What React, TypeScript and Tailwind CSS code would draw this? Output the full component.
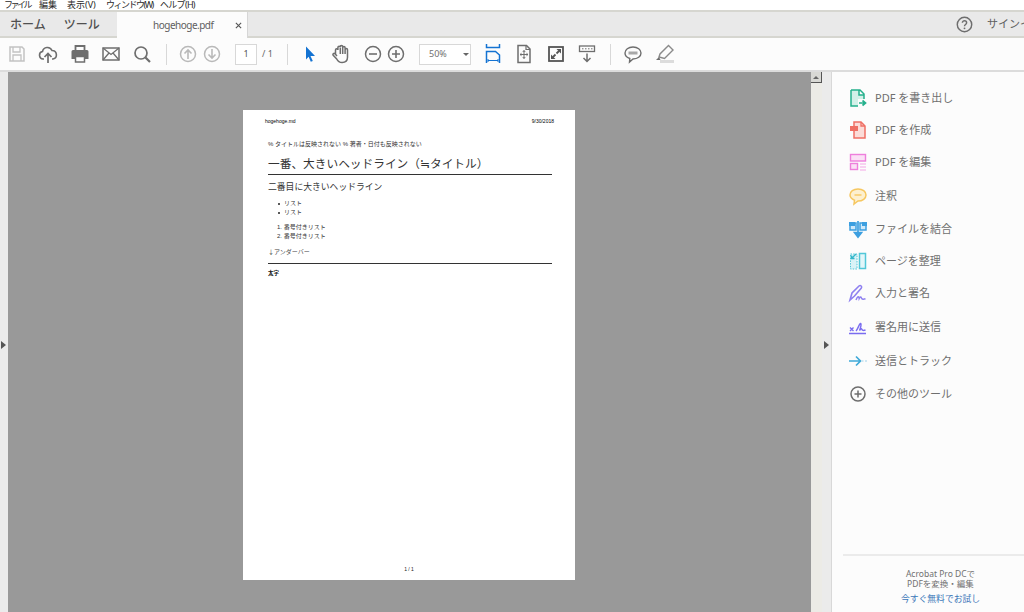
import React from "react";

const G = "#6e6e6e";
const L = "#b9b9b9";

const Svg = ({ children, className = "w-5 h-5" }: { children: React.ReactNode; className?: string }) => (
  <svg viewBox="0 0 20 20" fill="none" className={"shrink-0 " + className}>{children}</svg>
);

const Sep = ({ className }: { className: string }) => <div className={"w-px h-[21px] bg-[#d8d8d8] shrink-0 " + className} />;

function Row({ icon, label, className }: { icon: React.ReactNode; label: string; className: string }) {
  return (
    <div className={"flex items-center h-[32px] pl-[16px] gap-[7px] " + className}>
      <div className="w-5 h-5 shrink-0">{icon}</div>
      <span className="text-[11px] text-[#6f6f6f] whitespace-nowrap">{label}</span>
    </div>
  );
}

const sidebar: [React.ReactNode, string, string][] = [
  [<Svg><path d="M3 2h8v5h5v4H10v7H3z" fill="#d3f0e8"/><path d="M3 2h9l4 4v5M3 2v16h7M11 2v5h5" stroke="#25b08c" strokeWidth="1.500"/><path d="M11 15h6M14.500 12.500L17.500 15l-3 2.500" stroke="#25b08c" strokeWidth="1.700"/></Svg>, "PDF を書き出し", ""],
  [<Svg><path d="M6 2h7l4 4v12H6z" fill="#fbdcd8" stroke="#ef6f64" strokeWidth="1.500"/><path d="M13 2v4h4" stroke="#ef6f64" strokeWidth="1.300"/><rect x="2" y="6" width="8" height="5" fill="#ef6f64"/></Svg>, "PDF を作成", ""],
  [<Svg><rect x="2.500" y="2.500" width="15" height="6.500" fill="#fbe0f6" stroke="#ee7fdc" strokeWidth="1.400"/><rect x="2.500" y="11.500" width="7" height="6" fill="#fbe0f6" stroke="#ee7fdc" strokeWidth="1.400"/><path d="M12 12h6M12 15h6M12 18h6" stroke="#f3a5e6" strokeWidth="1.100"/></Svg>, "PDF を編集", ""],
  [<Svg><path d="M10 3c4.600 0 8 2.500 8 6s-3.400 6-8 6l-4 3 .5-3.700C3.800 13 2 11.300 2 9c0-3.500 3.400-6 8-6z" fill="#fdf0cf" stroke="#f6c760" strokeWidth="1.500"/><path d="M6.500 9h7" stroke="#f6c760" strokeWidth="1.400"/></Svg>, "注釈", "mt-[2px]"],
  [<Svg><path d="M2 4h6v7H2zM12 4h6v7h-6z" fill="#cfe9fa" stroke="#3c9fe0" strokeWidth="1.500"/><path d="M1 3h6v4H1zM14 3h5v4h-5z" fill="#3c9fe0"/><path d="M10 2v14M6.500 13.500L10 18l3.500-4.500z" stroke="#3c9fe0" strokeWidth="1.700" fill="#3c9fe0"/></Svg>, "ファイルを結合", "mt-[1px]"],
  [<Svg><rect x="2.500" y="3" width="6.500" height="15" fill="#d9f3f7" stroke="#52c7d8" strokeDasharray="1.500 1.200"/><rect x="11.500" y="2.500" width="6" height="15" fill="#e2f6f9" stroke="#52c7d8" strokeWidth="1.500"/><path d="M8 3L3.500 7.500M3.500 4.500v3h3" stroke="#35b6ca" strokeWidth="1.400"/></Svg>, "ページを整理", ""],
  [<Svg><path d="M2 17L4 10 11 3c1.500-1.300 3.500.5 2.200 2.200L6.500 13 2 17z" stroke="#8f80f0" strokeWidth="1.600"/><path d="M8 17c1.500-4 3-4 3.200-1.500 1-2 2-2 2.300-.5.500 1.500 2 1.500 4 .8" stroke="#8f80f0" strokeWidth="1.500"/></Svg>, "入力と署名", ""],
  [<Svg><path d="M1 16.500h17" stroke="#7a6cf0" strokeWidth="1.500"/><path d="M2 10.500l3.500 3.500M5.500 10.500L2 14" stroke="#7a6cf0" strokeWidth="1.400"/><path d="M8 14c2-2 3-7 4.500-7.500 1.200 0 0 5-1 7 1-1.500 2-2.500 2.500-1 .3 1.300 2 1 3.500.5" stroke="#7a6cf0" strokeWidth="1.400"/></Svg>, "署名用に送信", "mt-[2px]"],
  [<Svg><path d="M1 10h11M8 5.500l4.500 4.500L8 14.500" stroke="#3fa9d8" strokeWidth="1.700"/><path d="M14 10h1.500M17 10h2" stroke="#9fd2ea" strokeWidth="1.200"/></Svg>, "送信とトラック", "mt-[2px]"],
  [<Svg><circle cx="10" cy="10" r="7" stroke="#6e6e6e" strokeWidth="1.500"/><path d="M10 6.500v7M6.500 10h7" stroke="#6e6e6e" strokeWidth="1.500"/></Svg>, "その他のツール", "mt-[1px]"],
];

export default function App() {
  return (
    <div className="w-[1024px] h-[612px] overflow-hidden flex flex-col bg-[#fcfcfc] font-['Noto_Sans','Noto_Sans_CJK_JP',sans-serif]">
      {/* menu */}
      <div className="h-[10px] overflow-hidden bg-white flex items-end pl-[4px] text-[9px] leading-[13px] text-[#2a2a2a] shrink-0 whitespace-nowrap">
        <span className="-mb-[1px] w-[35px] tracking-[-2.500px]">ファイル</span>
        <span className="-mb-[1px] w-[28px]">編集</span>
        <span className="-mb-[1px] w-[39px]">表示(V)</span>
        <span className="-mb-[1px] w-[54px] tracking-[-1.500px]">ウィンドウ(W)</span>
        <span className="-mb-[1px] tracking-[-0.700px]">ヘルプ(H)</span>
      </div>
      {/* tabs */}
      <div className="h-[28px] shrink-0 flex bg-[#e9e9e9] border-t-2 border-b-2 border-[#d6d6d0]">
        <div className="flex items-center pl-[10px] pt-[2px] gap-[18px] w-[117px] text-[12px] font-medium text-[#505050]">
          <span>ホーム</span><span>ツール</span>
        </div>
        <div className="w-[131px] h-[26px] -mb-[2px] bg-[#fcfcfc] border-r border-[#d6d6d6] flex items-center pl-[36px] text-[10px] tracking-[-0.500px] text-[#606060]">
          <span>hogehoge.pdf</span>
          <svg viewBox="0 0 8 8" className="w-[7px] h-[7px] ml-[22px]"><path d="M1 1l6 6M7 1L1 7" stroke="#555" strokeWidth="1.300"/></svg>
        </div>
        <div className="flex-1 flex items-center justify-end">
          <Svg className="w-[17px] h-[17px] mr-[14px]"><circle cx="10" cy="10" r="8.500" stroke={G} strokeWidth="1.700"/><path d="M7.500 8c0-3.300 5-3.300 5 0 0 2-2.500 2-2.500 4" stroke={G} strokeWidth="1.700"/><circle cx="10" cy="14.500" r="1.100" fill={G}/></Svg>
          <span className="w-[37px] overflow-hidden whitespace-nowrap text-[11px] text-[#606060]">サインイン</span>
        </div>
      </div>
      {/* toolbar */}
      <div className="shrink-0 flex items-center bg-[#fcfcfc] border-b-2 border-[#dcdcdc] box-content h-[32px]">
        <Svg className="w-5 h-5 ml-[7px]"><path d="M3 3h12l2 2v12H3z" stroke="#c2c2c2" strokeWidth="1.500"/><path d="M6 3v5h7V3M6 17v-6h8v6" stroke="#c2c2c2" strokeWidth="1.300"/></Svg>
        <Svg className="w-5 h-5 ml-[11px]"><path d="M6 15H5a3.800 3.800 0 0 1-.5-7.500 5 5 0 0 1 9.500-1 4.300 4.300 0 0 1 1 8.500h-1" stroke={G} strokeWidth="1.600"/><path d="M10 19v-9M6.500 13L10 9.500l3.500 3.500" stroke={G} strokeWidth="1.700"/></Svg>
        <Svg className="w-5 h-5 ml-[12px]"><path d="M5.500 6V2h9v4" stroke={G} strokeWidth="1.800"/><path d="M3 6h14a1.500 1.500 0 0 1 1.500 1.500V15H15v-3H5v3H1.500V7.500A1.500 1.500 0 0 1 3 6z" fill={G}/><rect x="5.500" y="12.500" width="9" height="5.500" stroke={G} strokeWidth="1.500"/></Svg>
        <Svg className="w-5 h-5 ml-[11px]"><rect x="2" y="4" width="16" height="12" stroke={G} strokeWidth="1.500"/><path d="M2 4l8 6.500L18 4M2 16l6-7M18 16l-6-7" stroke={G} strokeWidth="1.300"/></Svg>
        <Svg className="w-5 h-5 ml-[11px]"><circle cx="9" cy="9" r="6" stroke={G} strokeWidth="1.700"/><path d="M13.500 13.500L18 18" stroke={G} strokeWidth="2.200"/></Svg>
        <Sep className="ml-[14px]" />
        <Svg className="w-5 h-5 ml-[11px]"><circle cx="10" cy="10" r="7.500" stroke={L} strokeWidth="1.500"/><path d="M10 15V6M6.500 9.500L10 6l3.500 3.500" stroke={L} strokeWidth="1.600"/></Svg>
        <Svg className="w-5 h-5 ml-[4px]"><circle cx="10" cy="10" r="7.500" stroke={L} strokeWidth="1.500"/><path d="M10 5v9M6.500 10.500L10 14l3.500-3.500" stroke={L} strokeWidth="1.600"/></Svg>
        <div className="w-[22px] h-[21px] ml-[13px] border border-[#d8d8d8] bg-white flex items-center justify-center text-[9px] text-[#555]">1</div>
        <span className="ml-[5px] w-[10px] whitespace-nowrap text-[9px] text-[#666]">/ 1</span>
        <Sep className="ml-[15px]" />
        <Svg className="w-5 h-5 ml-[12px]"><path d="M6 2.500l9 9.500h-4.500l2.300 5-2 .8-2.200-5L6 15.500z" fill="#1473d2"/></Svg>
        <Svg className="w-5 h-5 ml-[11px]"><path d="M4.500 10V6a1.200 1.200 0 0 1 2.400 0V3.500a1.200 1.200 0 0 1 2.400 0V2.800a1.200 1.200 0 0 1 2.400 0v1a1.200 1.200 0 0 1 2.400 0v2a1.200 1.200 0 0 1 2.400 0v7.500c0 3.200-2.200 5.200-5.400 5.200-3 0-4.400-1.500-5.400-3.500L2 11c-.6-1.200 1-2.200 2-1.200l2 2.200M9.300 4v6M11.700 3.500V10M14.100 5v5" stroke={G} strokeWidth="1.500"/></Svg>
        <Svg className="w-5 h-5 ml-[12px]"><circle cx="10" cy="10" r="7.500" stroke={G} strokeWidth="1.500"/><path d="M6 10h8" stroke={G} strokeWidth="1.600"/></Svg>
        <Svg className="w-5 h-5 ml-[3px]"><circle cx="10" cy="10" r="7.500" stroke={G} strokeWidth="1.500"/><path d="M6 10h8M10 6v8" stroke={G} strokeWidth="1.600"/></Svg>
        <div className="w-[52px] h-[21px] ml-[13px] border border-[#d8d8d8] bg-white flex items-center pl-[9px] text-[9px] text-[#707070]">
          <span>50%</span>
          <span className="ml-[16px] w-0 h-0 border-l-[3px] border-r-[3px] border-t-[3px] border-l-transparent border-r-transparent border-t-[#666]" />
        </div>
        <Svg className="w-5 h-5 ml-[12px]"><path d="M3.500 0v3.500h13V0" stroke="#1473d2" strokeWidth="1.500"/><path d="M3.500 19V7.500h9l4 3.500V19" stroke="#1473d2" strokeWidth="1.500"/><path d="M5 16.500h10M5 15v3M15 15v3" stroke="#1473d2" strokeWidth="1"/></Svg>
        <Svg className="w-5 h-5 ml-[11px]"><path d="M4 1.500h8.500L16 5v13.500H4z" stroke={G} strokeWidth="1.500"/><path d="M12 1.500V5.500h4" stroke={G} strokeWidth="1.200"/><path d="M10 6.500v8M6 10.500h8M8.800 8L10 6.500 11.200 8M8.800 13L10 14.500l1.200-1.500M7.500 9.300L6 10.500l1.500 1.200M12.500 9.300l1.500 1.200-1.500 1.200" stroke={G} strokeWidth="1"/></Svg>
        <Svg className="w-5 h-5 ml-[12px]"><rect x="3" y="3" width="14" height="14" stroke="#555" strokeWidth="1.800"/><path d="M10.500 5h4.500v4.500zM9.500 15H5v-4.500z" fill="#555"/><path d="M13 7l-2.500 2.500M7 13l2.500-2.500" stroke="#555" strokeWidth="1.800"/></Svg>
        <Svg className="w-5 h-5 ml-[11px]"><rect x="2.500" y="2" width="15" height="5.500" stroke={G} strokeWidth="1.300"/><path d="M5 4.800h1.500M8 4.800h1.500M11 4.800h1.500M14 4.800h1.500" stroke={G}/><path d="M10 9.500v8M6.500 14L10 17.500l3.500-3.500" stroke={G} strokeWidth="1.500"/></Svg>
        <Sep className="ml-[13px]" />
        <Svg className="w-5 h-5 ml-[12px]"><path d="M10 3c4.600 0 8 2.500 8 6s-3.400 6-8 6l-3.500 3 .3-3.500C3.800 13.500 2 11.500 2 9c0-3.500 3.400-6 8-6z" stroke={G} strokeWidth="1.400"/><path d="M5.500 7.500h9v3h-9z" fill="#a8a8a8"/></Svg>
        <Svg className="w-5 h-5 ml-[12px]"><path d="M4 13l1-3L13.500 1.500 18 6l-8.500 8.500z" stroke="#8a8a8a" strokeWidth="1.400"/><path d="M1 16h4.500L4 13z" fill={G}/><rect x="5" y="16" width="14" height="3" fill="#dcdcdc"/></Svg>
      </div>
      {/* main */}
      <div className="flex-1 flex min-h-0">
        <div className="w-[8px] bg-[#ebebeb] flex items-center pt-[6px] shrink-0">
          <span className="ml-[1px] w-0 h-0 border-t-[4px] border-b-[4px] border-l-[5px] border-t-transparent border-b-transparent border-l-[#555]" />
        </div>
        <div className="w-[803px] bg-[#999999] pt-[38px] pl-[235px] shrink-0">
          {/* page */}
          <div className="w-[332px] h-[470px] bg-white flex flex-col font-['Liberation_Sans','Noto_Sans_CJK_JP',sans-serif] text-[#222]">
            <div className="flex justify-between pl-[22px] pr-[21px] pt-[8px] text-[5px] leading-[6px] text-black">
              <span>hogehoge.md</span><span>9/30/2018</span>
            </div>
            <div className="flex-1 pl-[25px] pr-[23px] pt-[16px] flex flex-col">
              <p className="text-[6px] leading-[8px] text-[#333]">% タイトルは反映されない % 著者・日付も反映されない</p>
              <h1 className="mt-[7px] text-[11.700px] leading-[17px] text-[#333] whitespace-nowrap border-b border-[#333] pb-[2px]">一番、大きいヘッドライン（≒タイトル）</h1>
              <h2 className="mt-[5px] text-[8.800px] leading-[14px] text-[#333] whitespace-nowrap">二番目に大きいヘッドライン</h2>
              <ul className="mt-[5px] pl-[10px] text-[6px] leading-[9px] text-[#333]">
                <li className="flex items-center"><span className="w-[2px] h-[2px] rounded-full bg-[#222] mr-[4px]" />リスト</li>
                <li className="flex items-center"><span className="w-[2px] h-[2px] rounded-full bg-[#222] mr-[4px]" />リスト</li>
              </ul>
              <ol className="mt-[6px] pl-[9px] text-[6px] leading-[9px] text-[#333]">
                <li>1. 番号付きリスト</li>
                <li>2. 番号付きリスト</li>
              </ol>
              <p className="mt-[7px] text-[6px] leading-[8px] text-[#444] font-['Noto_Sans_CJK_JP',sans-serif]">↓アンダーバー</p>
              <div className="mt-[7px] h-px bg-[#333]" />
              <p className="mt-[5px] text-[5.500px] leading-[8px] font-bold text-[#111]">太字</p>
            </div>
            <div className="text-center text-[5px] leading-[6px] pb-[8px] text-[#222]">1 / 1</div>
          </div>
        </div>
        {/* scrollbar */}
        <div className="w-[11px] bg-[#ecebe6] shrink-0">
          <div className="h-[11px] bg-[#d8d8d4] border-r border-b border-[#555] flex items-center justify-center">
            <span className="w-0 h-0 border-l-[3px] border-r-[3px] border-b-[3px] border-l-transparent border-r-transparent border-b-[#666]" />
          </div>
        </div>
        <div className="w-[9px] bg-[#ebebeb] border-r border-[#d8d8d8] flex items-center pt-[6px] shrink-0 box-content">
          <span className="ml-[2px] w-0 h-0 border-t-[4px] border-b-[4px] border-l-[5px] border-t-transparent border-b-transparent border-l-[#555]" />
        </div>
        {/* right panel */}
        <div className="flex-1 bg-[#fcfcfc] flex flex-col min-w-0">
          <div className="pt-[10px] flex-1">
            {sidebar.map(([icon, label, cls]) => (
              <Row key={label} icon={icon} label={label} className={cls} />
            ))}
          </div>
          <div className="ml-[11px] border-t-2 border-[#ebebeb] h-[58px] pt-[13px] pl-[14px] flex flex-col items-center text-[8.500px] leading-[9.500px] text-[#707070]">
            <span>Acrobat Pro DCで</span>
            <span>PDFを変換・編集</span>
            <span className="mt-[7px] text-[8.800px] text-[#3a76b8]">今すぐ無料でお試し</span>
          </div>
        </div>
      </div>
    </div>
  );
}
